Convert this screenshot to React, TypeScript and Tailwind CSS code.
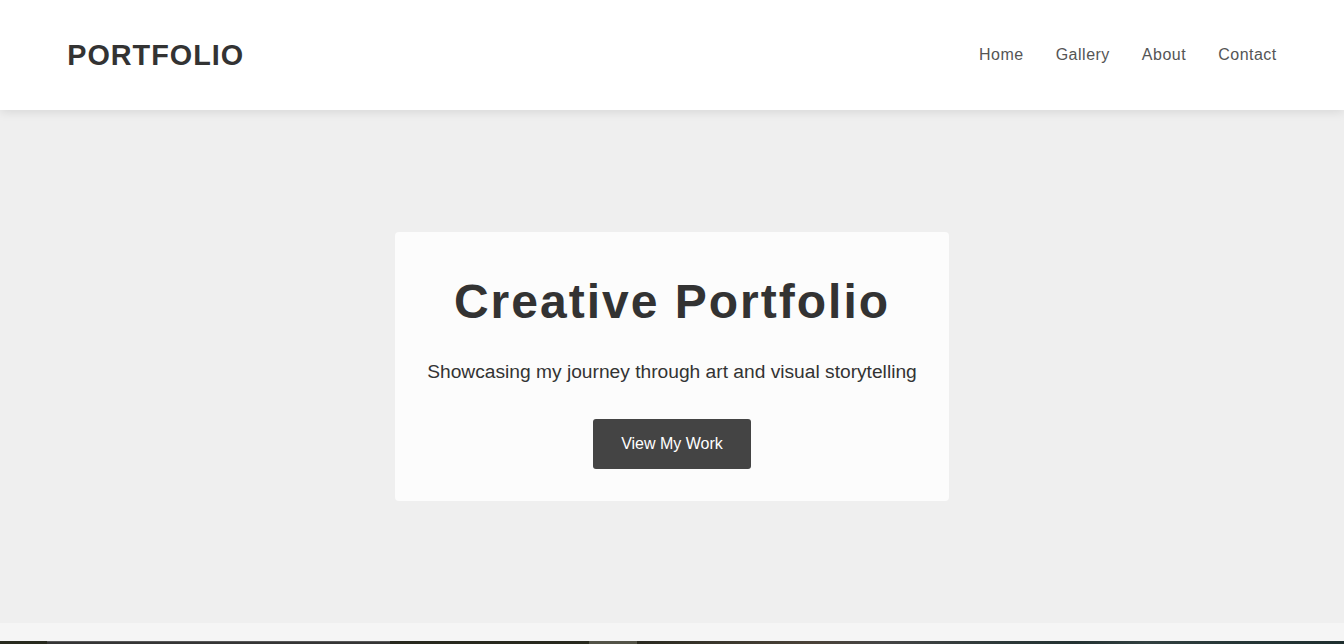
import React from 'react';

const navLinks = ['Home', 'Gallery', 'About', 'Contact'];

// the top edge of the gallery images peeks in at the bottom of the viewport
const galleryStrip = [
  { w: 'w-[47px]', cls: 'bg-[#282a1e]' },
  { w: 'w-[343px]', cls: 'bg-[#353535] border-t border-[#565656]' },
  { w: 'w-[199px]', cls: 'bg-[#28291e]' },
  { w: 'w-[48px]', cls: 'bg-[#535347]' },
  {
    w: 'flex-1',
    cls: 'bg-[linear-gradient(90deg,#2a2a20_0%,#3f3a30_15%,#4a4238_25%,#454545_35%,#2c3838_52%,#243232_62%,#324040_72%,#263636_85%,#1e2e2e_100%)]',
  },
];

const App: React.FC = () => {
  return (
    <div className="min-h-screen bg-[#f5f5f5] font-['Liberation_Sans',Arial,sans-serif] leading-[1.6] text-[#333]">
      {/* Header */}
      <header className="relative z-10 flex items-center justify-between bg-white px-[67.2px] py-8 shadow-[0_2px_10px_rgba(0,0,0,0.1)]">
        <div className="text-[28.8px] font-bold tracking-[1px] text-[#333]">PORTFOLIO</div>
        <nav className="flex gap-8">
          {navLinks.map((link) => (
            <a key={link} href="#" className="text-[16px] tracking-[0.5px] text-[#555]">
              {link}
            </a>
          ))}
        </nav>
      </header>

      {/* Hero */}
      <section className="flex h-[513px] items-center justify-center bg-[#efefef]">
        <div className="rounded bg-white/80 p-8 text-center">
          <h1 className="mb-4 text-[48px] font-bold tracking-[2px] text-[#333]">Creative Portfolio</h1>
          <p className="mb-8 text-[19.2px] text-[#333]">Showcasing my journey through art and visual storytelling</p>
          <button className="rounded-[3px] bg-[#444] px-7 py-3 text-[16px] leading-[26px] text-white">View My Work</button>
        </div>
      </section>

      {/* Gallery */}
      <section className="pt-[18px]">
        <div className="flex h-[200px]">
          {galleryStrip.map((item, idx) => (
            <div key={idx} className={`${item.w} ${item.cls}`}></div>
          ))}
        </div>
      </section>
    </div>
  );
};

export default App;
